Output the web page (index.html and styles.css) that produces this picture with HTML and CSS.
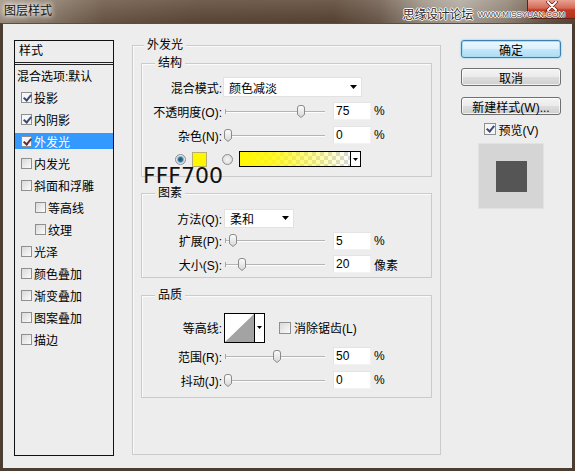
FILE: index.html
```html
<!DOCTYPE html>
<html lang="zh-CN">
<head>
<meta charset="utf-8">
<title>图层样式</title>
<link rel="stylesheet" href="styles.css">
</head>
<body>
<div class="window">
  <div class="titlebar">
    <span class="title">图层样式</span>
    <span class="watermark"><span class="wm-cn">思缘设计论坛</span><span class="wm-en">WWW.MISSYUAN.COM</span></span>
    <span class="close"><svg width="14" height="10" viewBox="0 0 14 10"><path d="M3 1 L11 9 M11 1 L3 9" stroke="#5a1a10" stroke-width="3.4" stroke-linecap="round"/><path d="M3 1 L11 9 M11 1 L3 9" stroke="#fff" stroke-width="2" stroke-linecap="round"/></svg></span>
  </div>
  <div class="body">
    <div class="stylelist">
      <div class="list-head">样式</div>
      <div class="list-item plain">混合选项:默认</div>
      <div class="list-item"><span class="cb on"></span>投影</div>
      <div class="list-item"><span class="cb on"></span>内阴影</div>
      <div class="list-item sel"><span class="cb on"></span>外发光</div>
      <div class="list-item"><span class="cb"></span>内发光</div>
      <div class="list-item"><span class="cb"></span>斜面和浮雕</div>
      <div class="list-item indent"><span class="cb"></span>等高线</div>
      <div class="list-item indent"><span class="cb"></span>纹理</div>
      <div class="list-item"><span class="cb"></span>光泽</div>
      <div class="list-item"><span class="cb"></span>颜色叠加</div>
      <div class="list-item"><span class="cb"></span>渐变叠加</div>
      <div class="list-item"><span class="cb"></span>图案叠加</div>
      <div class="list-item"><span class="cb"></span>描边</div>
    </div>

    <div class="outer">
      <div class="legend legend-outer">外发光</div>

      <div class="group g-struct">
        <div class="legend">结构</div>
        <div class="row">
          <span class="lbl">混合模式:</span>
          <span class="select sel-wide"><span>颜色减淡</span><svg width="7" height="4" viewBox="0 0 7 4"><path d="M0 0 H7 L3.5 4 Z" fill="#000"/></svg></span>
        </div>
        <div class="row">
          <span class="lbl">不透明度(O):</span>
          <span class="slider"><span class="thumb" style="left:72.8px"><svg width="10" height="13" viewBox="0 0 10 13"><defs><linearGradient id="tg" x1="0" y1="0" x2="0" y2="1"><stop offset="0" stop-color="#fdfdfd"/><stop offset="1" stop-color="#d6d6d6"/></linearGradient></defs><path d="M1.5 3 Q1.5 0.5 4 0.5 H6 Q8.5 0.5 8.5 3 V9.5 L5 12.5 L1.5 9.5 Z" fill="url(#tg)" stroke="#8a8a8a"/></svg></span></span>
          <span class="num">75</span><span class="unit">%</span>
        </div>
        <div class="row">
          <span class="lbl">杂色(N):</span>
          <span class="slider"><span class="thumb" style="left:0px"><svg width="10" height="13" viewBox="0 0 10 13"><path d="M1.5 3 Q1.5 0.5 4 0.5 H6 Q8.5 0.5 8.5 3 V9.5 L5 12.5 L1.5 9.5 Z" fill="url(#tg)" stroke="#8a8a8a"/></svg></span></span>
          <span class="num">0</span><span class="unit">%</span>
        </div>
        <div class="row colorrow">
          <span class="radio on"></span>
          <span class="swatch"></span>
          <span class="radio r2"></span>
          <span class="gradient"><span class="grad-fill"></span><span class="grad-dd"><svg width="5" height="3" viewBox="0 0 5 3"><path d="M0 0 H5 L2.5 3 Z" fill="#000"/></svg></span></span>
        </div>
        <span class="annot">FFF700</span>
      </div>

      <div class="group g-elem">
        <div class="legend">图素</div>
        <div class="row r22">
          <span class="lbl">方法(Q):</span>
          <span class="select sel-narrow"><span>柔和</span><svg width="7" height="4" viewBox="0 0 7 4"><path d="M0 0 H7 L3.5 4 Z" fill="#000"/></svg></span>
        </div>
        <div class="row r23">
          <span class="lbl">扩展(P):</span>
          <span class="slider"><span class="thumb" style="left:4.9px"><svg width="10" height="13" viewBox="0 0 10 13"><path d="M1.5 3 Q1.5 0.5 4 0.5 H6 Q8.5 0.5 8.5 3 V9.5 L5 12.5 L1.5 9.5 Z" fill="url(#tg)" stroke="#8a8a8a"/></svg></span></span>
          <span class="num">5</span><span class="unit">%</span>
        </div>
        <div class="row">
          <span class="lbl">大小(S):</span>
          <span class="slider"><span class="thumb" style="left:14px"><svg width="10" height="13" viewBox="0 0 10 13"><path d="M1.5 3 Q1.5 0.5 4 0.5 H6 Q8.5 0.5 8.5 3 V9.5 L5 12.5 L1.5 9.5 Z" fill="url(#tg)" stroke="#8a8a8a"/></svg></span></span>
          <span class="num">20</span><span class="unit">像素</span>
        </div>
      </div>

      <div class="group g-qual">
        <div class="legend">品质</div>
        <div class="row r31">
          <span class="lbl">等高线:</span>
          <span class="contour"><span class="contour-prev"><svg width="29" height="28" viewBox="0 0 29 28"><path d="M0 28 L29 0 V28 Z" fill="#a3a3a3"/></svg></span><span class="contour-dd"><svg width="5" height="3" viewBox="0 0 5 3"><path d="M0 0 H5 L2.5 3 Z" fill="#000"/></svg></span></span>
          <span class="cb cb-aa"></span><span class="cb-text">消除锯齿(L)</span>
        </div>
        <div class="row r26">
          <span class="lbl">范围(R):</span>
          <span class="slider"><span class="thumb" style="left:48.5px"><svg width="10" height="13" viewBox="0 0 10 13"><path d="M1.5 3 Q1.5 0.5 4 0.5 H6 Q8.5 0.5 8.5 3 V9.5 L5 12.5 L1.5 9.5 Z" fill="url(#tg)" stroke="#8a8a8a"/></svg></span></span>
          <span class="num">50</span><span class="unit">%</span>
        </div>
        <div class="row r22">
          <span class="lbl">抖动(J):</span>
          <span class="slider"><span class="thumb" style="left:0px"><svg width="10" height="13" viewBox="0 0 10 13"><path d="M1.5 3 Q1.5 0.5 4 0.5 H6 Q8.5 0.5 8.5 3 V9.5 L5 12.5 L1.5 9.5 Z" fill="url(#tg)" stroke="#8a8a8a"/></svg></span></span>
          <span class="num">0</span><span class="unit">%</span>
        </div>
      </div>
    </div>

    <div class="side">
      <div class="btn default">确定</div>
      <div class="btn b-cancel">取消</div>
      <div class="btn b-new">新建样式(W)...</div>
      <div class="preview-row"><span class="cb on"></span><span class="cb-text">预览(V)</span></div>
      <div class="preview"><span class="preview-sq"></span></div>
    </div>
  </div>
</div>
</body>
</html>
```

FILE: styles.css
```css
* { box-sizing: border-box; }

body {
  margin: 0;
  font-family: "Liberation Sans", "Noto Sans CJK SC", sans-serif;
  font-size: 12px;
  color: #000;
  background: #ededed;
}

.window {
  width: 575px;
  height: 471px;
  display: flex;
  flex-direction: column;
  overflow: hidden;
}

/* title bar */
.titlebar {
  height: 23px;
  flex: none;
  position: relative;
  display: flex;
  align-items: flex-start;
  background:
    linear-gradient(180deg, rgba(255,255,255,0.12), rgba(0,0,0,0.08)),
    linear-gradient(90deg, #a39585 0%, #8e7e6d 8%, #6d5847 18%, #5e4937 35%, #5b4635 58%, #6f5d4e 66%, #a29789 74%, #b3aaa0 80%, #958779 88%, #6a5544 95%, #5c4636 100%);
}

.title {
  padding-left: 4px;
  line-height: 22px;
  font-size: 12px;
  color: #151515;
  text-shadow: 0 0 4px #fff, 0 0 6px rgba(255,255,255,0.9), 0 0 9px rgba(255,255,255,0.7);
}

.watermark {
  position: absolute;
  right: 10px;
  top: 8px;
  display: flex;
  align-items: center;
  line-height: 14px;
  color: #2d2d2d;
  text-shadow: 1px 0 0 #fff, -1px 0 0 #fff, 0 1px 0 #fff, 0 -1px 0 #fff;
}

.wm-cn { font-size: 12px; letter-spacing: -0.3px; }

.wm-en {
  font-size: 8px;
  margin-left: 5px;
  color: #444;
}

.close {
  margin-left: auto;
  width: 48px;
  height: 19px;
  display: flex;
  justify-content: center;
  align-items: flex-start;
  padding-top: 1px;
  border: 1px solid #5a2418;
  border-top: none;
  border-right: none;
  border-radius: 0 0 0 5px;
  background: linear-gradient(180deg, #e7a192 0%, #d66a55 45%, #c33b24 55%, #b8321e 100%);
}

/* body */
.body {
  flex: 1;
  display: flex;
  align-items: flex-start;
  background: #ededed;
  border: 3px solid #4b3d31;
  border-top: 1px solid #5e4c3d;
  padding: 16px 11px 0 11px;
}

/* style list */
.stylelist {
  width: 100px;
  height: 416px;
  flex: none;
  border: 1px solid #111;
  background: #ededed;
}

.list-head {
  height: 24px;
  line-height: 21px;
  padding-left: 4px;
  border-bottom: 3px double #222;
}

.list-item {
  height: 22px;
  display: flex;
  align-items: center;
  padding-left: 6px;
  border-top: 2px solid #ededed;
  border-bottom: 4px solid #ededed;
  background-clip: padding-box;
  white-space: nowrap;
}

.list-item.plain { padding-left: 2px; }
.list-item.indent { padding-left: 20px; }

.list-item.sel {
  background-color: #3399ff;
  color: #fff;
}

/* checkbox */
.cb {
  width: 11px;
  height: 11px;
  flex: none;
  position: relative;
  margin-right: 2px;
  border: 1px solid #8e8f8f;
  background: linear-gradient(135deg, #d9d9d9, #fbfbfb);
}

.cb.on { background: #f6f6f6; }

.cb.on::after {
  content: "";
  position: absolute;
  left: 3px;
  top: 0;
  width: 3px;
  height: 6px;
  border: solid #3b4a78;
  border-width: 0 2px 2px 0;
  transform: rotate(40deg);
}

.list-item.sel .cb.on::after { border-color: #6a2a3a; }

/* main panel */
.outer {
  width: 309px;
  height: 410px;
  flex: none;
  margin: 5px 0 0 18px;
  padding: 17px 8px 0;
  position: relative;
  border: 1px solid #cbcbcb;
  box-shadow: inset 1px 1px 0 #fafafa;
}

.group {
  position: relative;
  border: 1px solid #cbcbcb;
  box-shadow: inset 1px 1px 0 #fafafa;
}

.legend {
  position: absolute;
  top: -7px;
  left: 13px;
  padding: 0 3px;
  line-height: 12px;
  background: #ededed;
}

.legend-outer { left: 11px; }

.g-struct { padding: 11px 0 5px; margin-bottom: 16px; }
.g-elem { padding: 13px 0 1px; margin-bottom: 17px; }
.g-qual { padding: 16px 0 6px; }

.row {
  height: 24px;
  display: flex;
  align-items: center;
  white-space: nowrap;
}

.row.r22 { height: 22px; }
.row.r23 { height: 23px; }
.row.r26 { height: 26px; }
.row.r31 { height: 31px; }

.lbl {
  width: 80px;
  flex: none;
  text-align: right;
}

.select {
  display: flex;
  align-items: center;
  justify-content: space-between;
  background: #fff;
  border: 1px solid #e2e2e2;
  padding: 0 4px 0 5px;
}

.sel-wide { width: 139px; height: 20px; margin-left: 1px; }
.sel-narrow { width: 70px; height: 19px; margin-left: 2px; padding-right: 4px; }

.slider {
  position: relative;
  width: 104px;
  height: 13px;
  margin-left: 1px;
  flex: none;
  background:
    linear-gradient(#b4b4b4, #b4b4b4) 2px 6px / 100px 1px no-repeat,
    linear-gradient(#fdfdfd, #fdfdfd) 2px 7px / 100px 1px no-repeat;
}

.slider::before {
  content: "";
  position: absolute;
  left: 2px;
  top: 4px;
  width: 1px;
  height: 5px;
  background: #a8a8a8;
}

.thumb {
  position: absolute;
  top: 0;
  width: 10px;
  height: 13px;
  display: block;
}

.thumb svg { display: block; }

.num {
  width: 38px;
  height: 18px;
  margin-left: 6px;
  padding-left: 2px;
  line-height: 17px;
  background: #fff;
  border: 1px solid #f2f2f2;
  border-top-color: #e4e4e4;
  border-left-color: #e4e4e4;
}

.unit { margin-left: 3px; }

/* color row */
.colorrow { padding-left: 33px; }

.radio {
  width: 11px;
  height: 11px;
  flex: none;
  border-radius: 50%;
  border: 1px solid #8c8c8c;
  background: radial-gradient(circle, #f4f4f4 0, #d7d7d7 100%);
}

.radio.on {
  background: radial-gradient(circle, #1e4f6e 0, #2f6f96 2px, #7fb3d0 3px, #e9e9e9 4px);
}

.radio.r2 { margin-left: 15px; }

.swatch {
  width: 15px;
  height: 15px;
  margin-left: 6px;
  background: #fff700;
  border: 1px solid #b5b070;
}

.gradient {
  width: 122px;
  height: 16px;
  margin-left: 6px;
  display: flex;
  border: 1px solid #000;
}

.grad-fill {
  flex: 1;
  background:
    linear-gradient(90deg, #fff700 0%, rgba(255,247,0,0.85) 30%, rgba(255,247,0,0) 100%),
    conic-gradient(#ffffff 25%, #d9d9d9 0 50%, #ffffff 0 75%, #d9d9d9 0) 0 0 / 8px 8px;
}

.grad-dd {
  width: 10px;
  border-left: 1px solid #000;
  background: #fff;
  display: flex;
  align-items: center;
  justify-content: center;
}

.annot {
  position: absolute;
  left: 1px;
  top: 104px;
  font-family: "DejaVu Sans", sans-serif;
  font-size: 22px;
  line-height: 16px;
  color: #111;
}

/* contour */
.contour {
  width: 41px;
  height: 30px;
  margin-left: 2px;
  display: flex;
  background: #fff;
  border: 1px solid #000;
}

.contour-prev { flex: 1; display: flex; }
.contour-prev svg { display: block; }

.contour-dd {
  width: 10px;
  border-left: 1px solid #000;
  display: flex;
  align-items: center;
  justify-content: center;
}

.cb-aa { margin-left: 14px; width: 12px; height: 12px; }

.cb-text { margin-left: 1px; }

/* right column */
.side {
  width: 100px;
  flex: none;
  margin-left: 20px;
  display: flex;
  flex-direction: column;
  align-items: center;
}

.btn {
  width: 100px;
  height: 18px;
  display: flex;
  align-items: center;
  justify-content: center;
  border: 1px solid #707070;
  border-radius: 3px;
  background: linear-gradient(180deg, #f4f4f4 0%, #ebebeb 48%, #dddddd 52%, #cfcfcf 100%);
  box-shadow: inset 0 0 0 1px rgba(255,255,255,0.7);
}

.btn.default {
  border-color: #3c7fb1;
  background: linear-gradient(180deg, #ecf7fd 0%, #dcf1fc 48%, #c4e6f9 52%, #afdcf4 100%);
  box-shadow: inset 0 0 0 1px #a6dcf4, 0 0 2px #6ac3ea;
}

.b-cancel { margin-top: 10px; }
.b-new { margin-top: 11px; }

.preview-row {
  height: 16px;
  margin-top: 6px;
  display: flex;
  align-items: center;
}

.preview-row .cb { width: 12px; height: 12px; margin-right: 2px; }

.preview {
  width: 66px;
  height: 66px;
  margin-top: 6px;
  display: flex;
  align-items: center;
  justify-content: center;
  background: #d5d5d5;
  border: 1px solid #e2e2e2;
}

.preview-sq {
  width: 31px;
  height: 31px;
  background: #555;
}
```
